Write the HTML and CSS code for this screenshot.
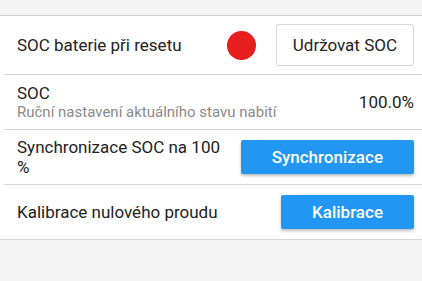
FILE: index.html
```html
<!DOCTYPE html>
<html lang="cs">
<head>
<meta charset="utf-8">
<link rel="stylesheet" href="styles.css">
</head>
<body>
<div class="card">
  <div class="row row-first">
    <div class="label">SOC baterie při resetu</div>
    <span class="dot"></span>
    <button class="btn-outline">Udržovat SOC</button>
  </div>
  <div class="row">
    <div class="label">
      <div class="title">SOC</div>
      <div class="sub">Ruční nastavení aktuálního stavu nabití</div>
    </div>
    <div class="value">100.0%</div>
  </div>
  <div class="row">
    <div class="label">Synchronizace SOC na 100 %</div>
    <button class="btn-blue">Synchronizace</button>
  </div>
  <div class="row row-last">
    <div class="label">Kalibrace nulového proudu</div>
    <button class="btn-blue">Kalibrace</button>
  </div>
</div>
</body>
</html>
```
FILE: styles.css
```css
html, body {
  margin: 0;
  padding: 0;
  background: #f3f3f3;
  font-family: Roboto, "Noto Sans", sans-serif;
  color: #222;
}
body {
  padding-top: 15px;
}
.card {
  background: #fff;
  border-top: 1px solid #d4d4d4;
  border-bottom: 1px solid #d4d4d4;
}
.row {
  display: flex;
  align-items: center;
  gap: 16px;
  min-height: 55px;
  margin-left: 4px;
  padding: 0 8px 0 13px;
  border-bottom: 1px solid #d4d4d4;
  box-sizing: border-box;
}
.row-first {
  min-height: 59px;
  gap: 0;
}
.row-last {
  border-bottom: none;
  min-height: 54px;
}
.label {
  flex: 1;
  font-size: 17px;
  line-height: 20px;
}
.title {
  font-size: 17px;
  line-height: 20px;
}
.sub {
  font-size: 15px;
  line-height: 18px;
  color: #8a8a8a;
}
.value {
  font-size: 17px;
}
.dot {
  width: 29px;
  height: 29px;
  border-radius: 50%;
  background: #e61e1e;
  margin-right: 20px;
}
.btn-outline {
  font-family: inherit;
  font-size: 17px;
  color: #222;
  background: #fff;
  border: 1px solid #d6d6d6;
  border-radius: 3px;
  height: 42px;
  padding: 0 16px;
}
.btn-blue {
  font-family: inherit;
  font-size: 17px;
  font-weight: 500;
  color: #fff;
  background: #2196f3;
  border: none;
  border-radius: 2px;
  height: 34px;
  padding: 0 31px;
  box-shadow: 0 2px 3px rgba(0, 0, 0, 0.25);
}
```
